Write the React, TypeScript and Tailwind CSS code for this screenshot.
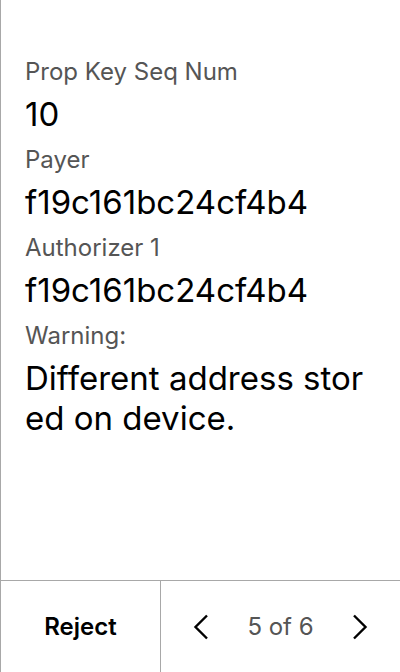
const fields = [
  { label: "Prop Key Seq Num", value: "10" },
  { label: "Payer", value: "f19c161bc24cf4b4" },
  { label: "Authorizer 1", value: "f19c161bc24cf4b4" },
  { label: "Warning:", value: "Different address stored on device." },
];

export default function App() {
  return (
    <div
      className="flex h-[672px] w-[400px] flex-col border-l border-[#a8a8a8] bg-white text-black"
      style={{ fontFamily: "Inter, 'Noto Sans', sans-serif" }}
    >
      <div className="flex-1 pl-6 pr-[30px] pt-[58px]">
        {fields.map((f) => (
          <div key={f.label} className="mb-3">
            <div className="mb-2 text-[24px] leading-[28px] text-[#555555]">{f.label}</div>
            <div className="break-all text-[33px] leading-[40px]">{f.value}</div>
          </div>
        ))}
      </div>
      <div className="flex h-[92px] border-t border-[#a8a8a8]">
        <button className="w-[160px] border-r border-[#a8a8a8] text-[24px] font-semibold">
          Reject
        </button>
        <div className="flex flex-1 items-center justify-between pl-[32px] pr-[32px]">
          <svg width="16" height="26" viewBox="0 0 16 26" fill="none">
            <path d="M14 1.5 L2.5 13 L14 24.5" stroke="#000" strokeWidth="2.4" />
          </svg>
          <span className="text-[24px] text-[#555555]">5 of 6</span>
          <svg width="16" height="26" viewBox="0 0 16 26" fill="none">
            <path d="M2 1.5 L13.5 13 L2 24.5" stroke="#000" strokeWidth="2.4" />
          </svg>
        </div>
      </div>
    </div>
  );
}
